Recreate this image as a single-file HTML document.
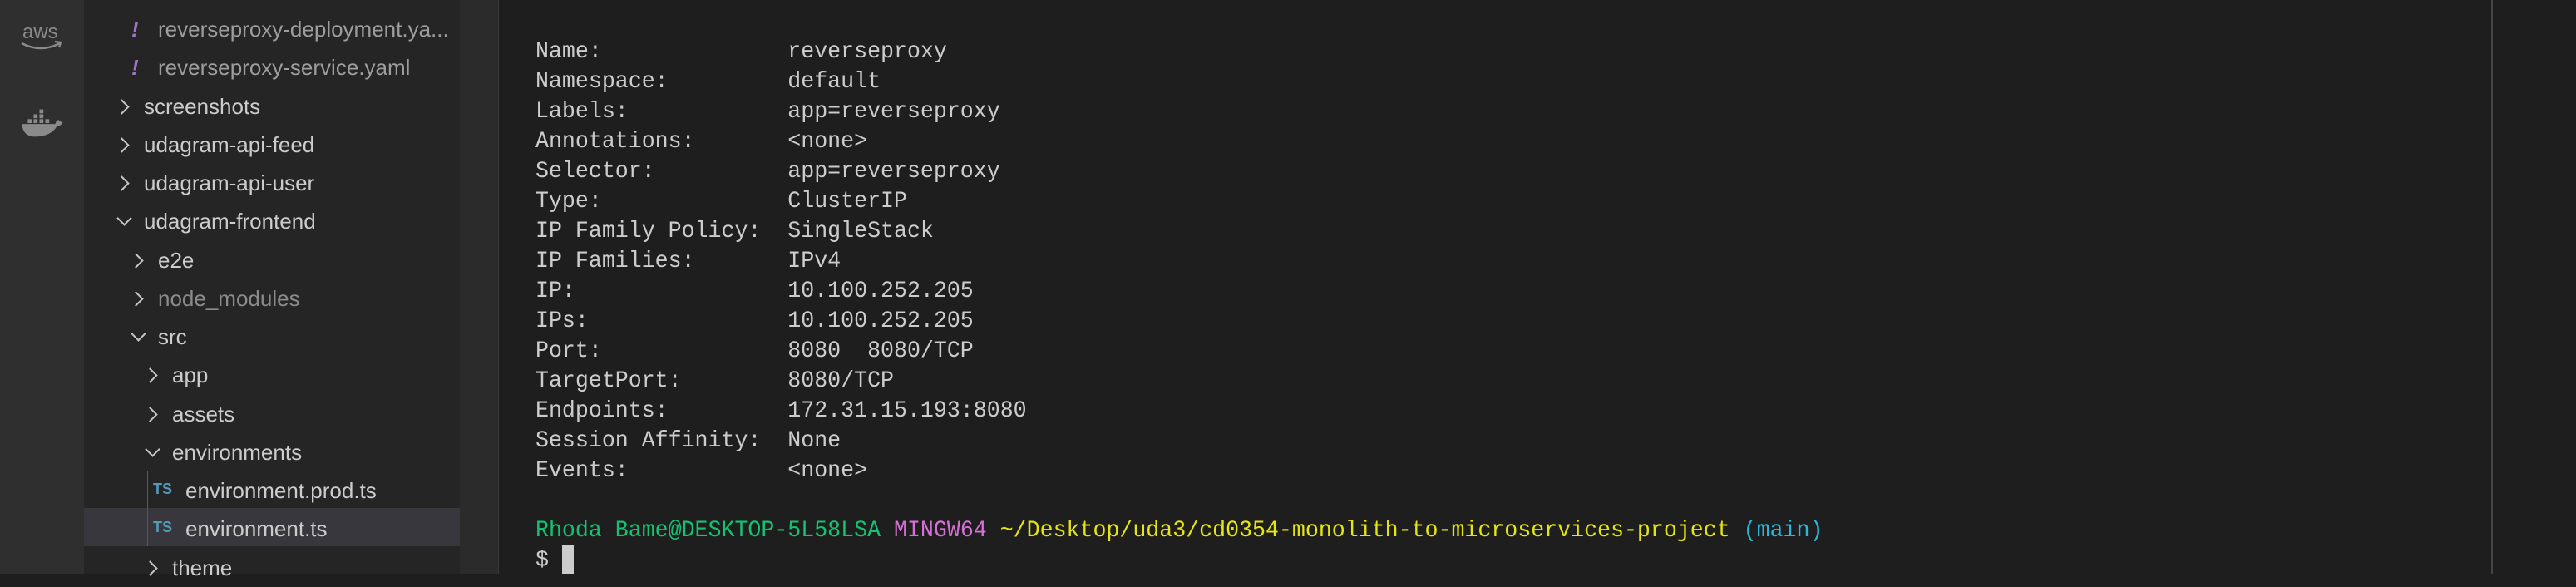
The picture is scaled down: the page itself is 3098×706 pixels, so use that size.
<!DOCTYPE html>
<html><head><meta charset="utf-8"><style>
body{margin:0;width:3098px;height:690px;background:#1e1e1e;overflow:hidden;position:relative;font-family:"Liberation Sans",sans-serif}
#act{position:absolute;left:0;top:0;width:101px;height:690px;background:#2f2f2f}
#side{position:absolute;left:101px;top:0;width:452px;height:690px;background:#252526}
#strip{position:absolute;left:553px;top:0;width:46px;height:690px;background:#2b2b2b;border-right:1px solid #3a3a3a}
.r{position:absolute;height:46px;line-height:46px;font-size:26px;color:#cccccc;white-space:nowrap}
.ch{position:absolute;width:11px;height:11px;border-right:2px solid #c5c5c5;border-bottom:2px solid #c5c5c5}
.rt{transform:rotate(-45deg)}.dn{transform:rotate(45deg)}
.t{position:absolute;font-family:"Liberation Mono",monospace;font-size:28px;color:#cccccc;white-space:pre;line-height:36px;transform:scaleX(0.95);transform-origin:0 0}
</style></head><body>
<div id="act">
<svg style="position:absolute;left:24px;top:24px" width="54" height="40" viewBox="0 0 54 40"><text x="3" y="22" font-family="Liberation Sans" font-size="24" fill="#8a8a8a">aws</text><path d="M2 28 Q25 40 48 28" stroke="#8a8a8a" stroke-width="2.5" fill="none"/><path d="M42 26 L49 27 L47 33" stroke="#8a8a8a" stroke-width="2.3" fill="none"/></svg>
<svg style="position:absolute;left:24px;top:128px" width="54" height="40" viewBox="0 0 46 32"><g fill="#8a8a8a"><rect x="20" y="2" width="4" height="4"/><rect x="14" y="7" width="4" height="4"/><rect x="20" y="7" width="4" height="4"/><rect x="8" y="12" width="4" height="4"/><rect x="14" y="12" width="4" height="4"/><rect x="20" y="12" width="4" height="4"/><rect x="26" y="12" width="4" height="4"/><path d="M2 17 H36 Q38 12 40 13 Q41 15 44 15 Q42 19 38 19 Q32 30 14 30 Q3 29 2 17Z"/></g></svg>
</div>
<div id="side">
<div style="position:absolute;left:0;top:611px;width:452px;height:46px;background:#37373d"></div>
<div style="position:absolute;left:76px;top:566px;width:1px;height:91px;background:#585858"></div>
</div>
<div id="strip"></div>
<div style="position:absolute;left:2996px;top:0;width:2px;height:690px;background:#454545"></div>

<div class="r" style="left:158px;top:12px;color:#a074c4;font-weight:bold;font-style:italic">!</div><div class="r" style="left:190px;top:12px;color:#9d9d9d">reverseproxy-deployment.ya...</div>
<div class="r" style="left:158px;top:58px;color:#a074c4;font-weight:bold;font-style:italic">!</div><div class="r" style="left:190px;top:58px;color:#9d9d9d">reverseproxy-service.yaml</div>
<div class="ch rt" style="left:140px;top:122px"></div><div class="r" style="left:173px;top:105px">screenshots</div>
<div class="ch rt" style="left:140px;top:168px"></div><div class="r" style="left:173px;top:151px">udagram-api-feed</div>
<div class="ch rt" style="left:140px;top:214px"></div><div class="r" style="left:173px;top:197px">udagram-api-user</div>
<div class="ch dn" style="left:143px;top:256px"></div><div class="r" style="left:173px;top:243px">udagram-frontend</div>
<div class="ch rt" style="left:157px;top:307px"></div><div class="r" style="left:190px;top:290px">e2e</div>
<div class="ch rt" style="left:157px;top:353px"></div><div class="r" style="left:190px;top:336px;color:#8b8b8b">node_modules</div>
<div class="ch dn" style="left:160px;top:395px"></div><div class="r" style="left:190px;top:382px">src</div>
<div class="ch rt" style="left:174px;top:445px"></div><div class="r" style="left:207px;top:428px">app</div>
<div class="ch rt" style="left:174px;top:492px"></div><div class="r" style="left:207px;top:475px">assets</div>
<div class="ch dn" style="left:177px;top:534px"></div><div class="r" style="left:207px;top:521px">environments</div>
<div class="r" style="left:184px;top:565px;font-size:18px;font-weight:bold;color:#519aba">TS</div><div class="r" style="left:223px;top:567px">environment.prod.ts</div>
<div class="r" style="left:184px;top:611px;font-size:18px;font-weight:bold;color:#519aba">TS</div><div class="r" style="left:223px;top:613px">environment.ts</div>
<div class="ch rt" style="left:174px;top:677px"></div><div class="r" style="left:207px;top:660px">theme</div>

<div class="t" style="left:644px;top:45px">Name:              reverseproxy
Namespace:         default
Labels:            app=reverseproxy
Annotations:       &lt;none&gt;
Selector:          app=reverseproxy
Type:              ClusterIP
IP Family Policy:  SingleStack
IP Families:       IPv4
IP:                10.100.252.205
IPs:               10.100.252.205
Port:              8080  8080/TCP
TargetPort:        8080/TCP
Endpoints:         172.31.15.193:8080
Session Affinity:  None
Events:            &lt;none&gt;

<span style="color:#16c172">Rhoda Bame@DESKTOP-5L58LSA</span> <span style="color:#d670d6">MINGW64</span> <span style="color:#e5e510">~/Desktop/uda3/cd0354-monolith-to-microservices-project</span> <span style="color:#29b8db">(main)</span>
$ </div>
<div style="position:absolute;left:676px;top:655px;width:14px;height:35px;background:#cccccc"></div>
</body></html>
